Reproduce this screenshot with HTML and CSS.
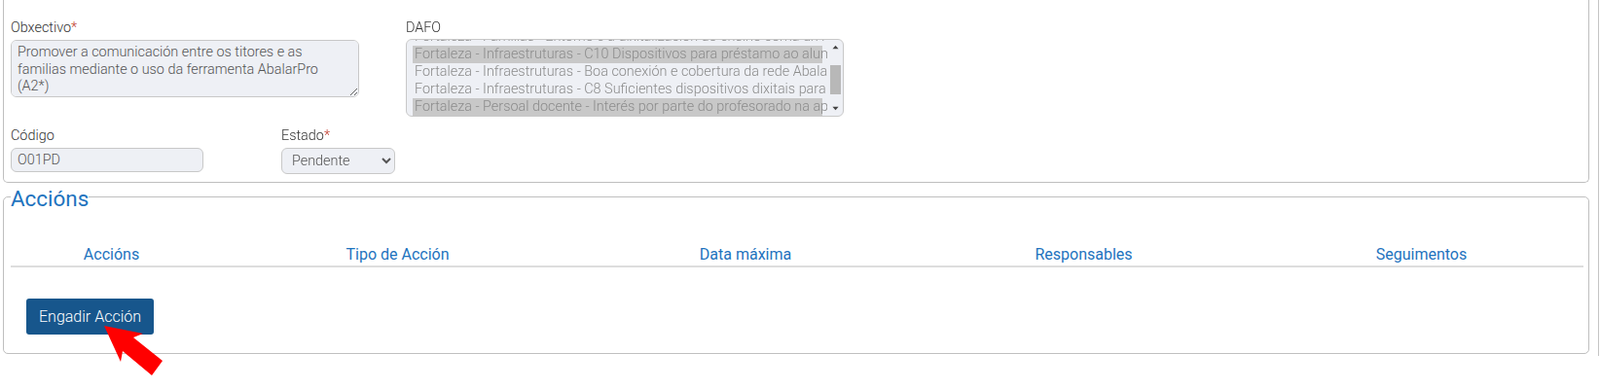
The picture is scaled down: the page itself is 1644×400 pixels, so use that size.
FILE: index.html
```html
<!DOCTYPE html>
<html>
<head>
  <meta charset="utf-8">
  <link rel="stylesheet" href="styles.css">
</head>
<body>
  <div class="page">
    <div class="panel">
      <div class="form-row first-row">
        <div class="field field-goal">
          <label>Obxectivo<span class="req">*</span></label>
          <textarea disabled>Promover a comunicación entre os titores e as familias mediante o uso da ferramenta AbalarPro (A2*)</textarea>
        </div>
        <div class="field field-dafo">
          <label>DAFO</label>
          <div class="listbox">
            <div class="listbox-options">
              <div class="option">Fortaleza - Familias - Entorno e a dixitalización do ensino coma un reto para as familias</div>
              <div class="option selected">Fortaleza - Infraestruturas - C10 Dispositivos para préstamo ao alumnado</div>
              <div class="option">Fortaleza - Infraestruturas - Boa conexión e cobertura da rede Abalar</div>
              <div class="option">Fortaleza - Infraestruturas - C8 Suficientes dispositivos dixitais para o alumnado</div>
              <div class="option selected">Fortaleza - Persoal docente - Interés por parte do profesorado na aprendizaxe</div>
            </div>
            <div class="listbox-scroll">
              <svg class="scroll-arrow" viewBox="0 0 8 5"><path d="M4 0.5 L7.5 4.5 L0.5 4.5 Z"/></svg>
              <div class="scroll-track"><div class="scroll-thumb"></div></div>
              <svg class="scroll-arrow" viewBox="0 0 8 5"><path d="M0.5 0.5 L7.5 0.5 L4 4.5 Z"/></svg>
            </div>
          </div>
        </div>
      </div>
      <div class="form-row">
        <div class="field field-code">
          <label>Código</label>
          <input type="text" value="O01PD" disabled>
        </div>
        <div class="field field-state">
          <label>Estado<span class="req">*</span></label>
          <select>
            <option>Pendente</option>
          </select>
        </div>
      </div>
    </div>

    <fieldset class="actions">
      <legend>Accións</legend>
      <table class="actions-table">
        <thead>
          <tr>
            <th class="col-action">Accións</th>
            <th class="col-type">Tipo de Acción</th>
            <th class="col-date">Data máxima</th>
            <th class="col-people">Responsables</th>
            <th class="col-follow">Seguimentos</th>
          </tr>
        </thead>
      </table>
      <button class="add-action">Engadir Acción</button>
    </fieldset>

    <!-- red arrow added over the screenshot, points at the button -->
    <svg class="pointer" viewBox="0 0 62 52"><polygon points="0,0 40,8 30,12 60,36 49,51 19,26 17,37" fill="#ff0000"/></svg>
  </div>
</body>
</html>
```

FILE: styles.css
```css
html,
body {
  height: 400px;
}

body {
  margin: 0;
  background: #fff;
  font-family: Roboto, sans-serif;
  font-weight: 300;
  font-size: 14.4px;
  color: #333;
}

.page {
  position: relative;
  width: 1639px;
  height: 366px;
  margin-left: 3px;
  border-right: 1px solid #c4c4c4;
}

.panel {
  width: 1630px;
  height: 188px;
  box-sizing: border-box;
  padding: 20px 7px 0;
  border: 1px solid #bfbfbf;
  border-top: none;
  border-radius: 0 0 5px 5px;
}

.form-row {
  display: flex;
}

.first-row {
  height: 111px;
}

.field label {
  display: block;
  height: 21px;
  line-height: 17px;
}

.req {
  color: #c0392b;
}

.field-goal {
  width: 358px;
  margin-right: 48px;
}

.field-dafo {
  width: 450px;
}

.field-code {
  width: 198px;
  margin-right: 80px;
}

.field-state {
  width: 117px;
}

textarea,
input,
select {
  display: block;
  box-sizing: border-box;
  width: 100%;
  margin: 0;
  font-family: Roboto, sans-serif;
  font-weight: 300;
  font-size: 14.4px;
  color: #555;
  background-color: #eef0f5;
  border: 1px solid #c8c8c8;
  border-radius: 6px;
  opacity: 1;
}

textarea {
  height: 59px;
  padding: 3px 6px;
  line-height: 17.6px;
}

input {
  height: 25px;
  padding: 0 6px;
}

select {
  height: 27px;
  padding: 0 6px;
}

.listbox {
  display: flex;
  height: 80px;
  box-sizing: border-box;
  margin-top: -1px;
  padding: 0 2px 0 6px;
  background: #eef0f5;
  border: 1px solid #c8c8c8;
  border-radius: 6px;
  overflow: hidden;
}

.listbox-options {
  width: 426px;
  flex: none;
  display: flex;
  flex-direction: column;
  justify-content: flex-end;
  overflow: hidden;
  color: #8c8c8c;
}

.option {
  flex: none;
  width: 421px;
  height: 18px;
  line-height: 18px;
  padding-left: 2px;
  box-sizing: border-box;
  white-space: nowrap;
}

.option.selected {
  background: #c8c8c8;
}

.listbox-scroll {
  width: 11px;
  margin-left: 3px;
  display: flex;
  flex-direction: column;
  align-items: center;
}

.scroll-arrow {
  flex: none;
  width: 7px;
  height: 5px;
  margin: 5px 0;
  fill: #444;
}

.scroll-track {
  flex: 1;
}

.scroll-thumb {
  width: 11px;
  height: 30px;
  margin-top: 11px;
  background: #b8b8b8;
}

.actions {
  width: 1630px;
  height: 176px;
  box-sizing: border-box;
  min-width: 0;
  margin: 0;
  padding: 0 5px 0 7px;
  border: 1px solid #bfbfbf;
  border-radius: 5px;
}

.actions legend {
  padding: 3px 0 0;
  font-size: 22.4px;
  font-weight: 400;
  line-height: 26px;
  color: #1e73be;
}

.actions-table {
  width: 100%;
  margin-top: 35px;
  table-layout: fixed;
  border-collapse: collapse;
}

.actions-table th {
  padding: 0 0 1px;
  font-weight: 400;
  font-size: 16px;
  line-height: 20px;
  color: #1e73be;
  border-bottom: 2px solid #ddd;
}

.col-action { width: 207px; }
.col-type { width: 381px; }
.col-date { width: 334px; }
.col-people { width: 361px; }

.add-action {
  display: block;
  width: 131px;
  height: 37px;
  margin: 32px 0 0 16px;
  padding: 0;
  font-family: Roboto, sans-serif;
  font-weight: 300;
  font-size: 16px;
  color: #fff;
  background: #17568c;
  border: none;
  border-radius: 3px;
}

.pointer {
  position: absolute;
  left: 104px;
  top: 335px;
  width: 62px;
  height: 52px;
}
```
